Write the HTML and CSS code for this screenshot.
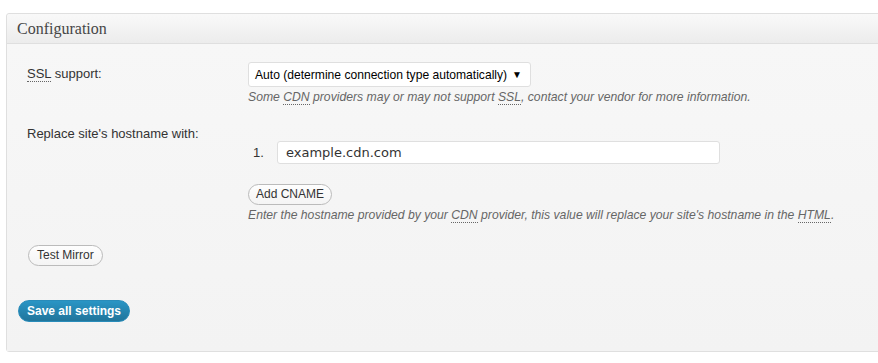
FILE: index.html
```html
<!DOCTYPE html>
<html>
<head>
<meta charset="utf-8">
<link rel="stylesheet" href="styles.css">
</head>
<body>
<div class="wrap">
  <div class="panel">
    <div class="panel-header"><h3>Configuration</h3></div>
    <div class="panel-body">
      <div class="row row-ssl">
        <div class="label"><abbr>SSL</abbr> support:</div>
        <div class="field">
          <div class="select"><span class="opt">Auto (determine connection type automatically)</span><span class="arrow">▼</span></div>
          <div class="desc">Some <abbr>CDN</abbr> providers may or may not support <abbr>SSL</abbr>, contact your vendor for more information.</div>
        </div>
      </div>
      <div class="row row-host">
        <div class="label">Replace site's hostname with:</div>
        <div class="field">
          <div class="cname">
            <span class="num">1.</span>
            <div class="input">example.cdn.com</div>
          </div>
          <div class="btn btn-add">Add CNAME</div>
          <div class="desc">Enter the hostname provided by your <abbr>CDN</abbr> provider, this value will replace your site's hostname in the <abbr>HTML</abbr>.</div>
        </div>
      </div>
      <div class="btn btn-test">Test Mirror</div>
      <div class="btn-primary">Save all settings</div>
    </div>
  </div>
</div>
</body>
</html>
```
FILE: styles.css
```css
html, body {
  margin: 0;
  padding: 0;
  background: #fff;
  overflow: hidden;
}
body {
  font-family: "Liberation Sans", Arial, sans-serif;
  font-size: 13px;
  color: #333;
}
.wrap {
  padding: 13px 0 0 6px;
  width: 920px;
}
.panel {
  border: 1px solid #dfdfdf;
  border-radius: 3px 0 0 3px;
  background: #f5f5f5;
  height: 339px;
  box-sizing: border-box;
}
.panel-header {
  height: 29px;
  background: linear-gradient(to bottom, #f9f9f9, #ececec);
  border-bottom: 1px solid #dfdfdf;
  border-radius: 3px 0 0 0;
}
.panel-header h3 {
  margin: 0;
  padding: 5px 0 0 10px;
  font-family: "Liberation Serif", "Times New Roman", serif;
  font-weight: normal;
  font-size: 16px;
  line-height: 20px;
  color: #464646;
}
.panel-body {
  padding: 18px 0 0 20px;
  background: linear-gradient(to bottom, #f7f7f7, #f3f3f3);
  height: 307px;
  box-sizing: border-box;
}
abbr {
  text-decoration: none;
  border-bottom: 1px dotted #666;
}
.row {
  display: grid;
  grid-template-columns: 221px auto;
}
.label {
  padding-top: 4px;
  line-height: 15px;
  color: #333;
}
.select {
  display: flex;
  align-items: center;
  justify-content: space-between;
  box-sizing: border-box;
  height: 25px;
  width: 283px;
  padding: 0 8px 0 6px;
  background: #fff;
  border: 1px solid #dfdfdf;
  border-radius: 3px;
  color: #000;
  white-space: nowrap;
}
.opt {
  font-size: 12.1px;
}
.arrow {
  font-size: 10px;
  color: #000;
}
.desc {
  font-style: italic;
  font-size: 12.2px;
  line-height: 16px;
  color: #666;
  margin-top: 2px;
}
.row-host {
  margin-top: 17px;
}
.cname {
  display: flex;
  align-items: center;
  margin-top: 19px;
  padding-left: 5px;
}
.num {
  width: 24px;
  color: #333;
}
.input {
  box-sizing: border-box;
  width: 443px;
  height: 23px;
  padding: 0 8px;
  line-height: 21px;
  background: #fff;
  border: 1px solid #dfdfdf;
  border-radius: 3px;
  font-family: "DejaVu Sans", Verdana, sans-serif;
  font-size: 13px;
  color: #333;
}
.btn {
  display: table;
  box-sizing: border-box;
  height: 21px;
  line-height: 19px;
  padding: 0 8px;
  border: 1px solid #bbb;
  border-radius: 11px;
  background: linear-gradient(to bottom, #fefefe, #f4f4f4);
  font-size: 12px;
  color: #333;
}
.btn-add {
  margin-top: 20px;
  padding: 0 7px;
}
.btn-test {
  margin-top: 22px;
  margin-left: 1px;
}
.btn-primary {
  display: table;
  box-sizing: border-box;
  height: 22px;
  line-height: 20px;
  padding: 0 8px;
  margin-top: 34px;
  margin-left: -9px;
  border: 1px solid #298cba;
  border-radius: 11px;
  background: linear-gradient(to bottom, #2a95c5, #21759b);
  color: #fff;
  font-weight: bold;
  font-size: 12px;
}
```
